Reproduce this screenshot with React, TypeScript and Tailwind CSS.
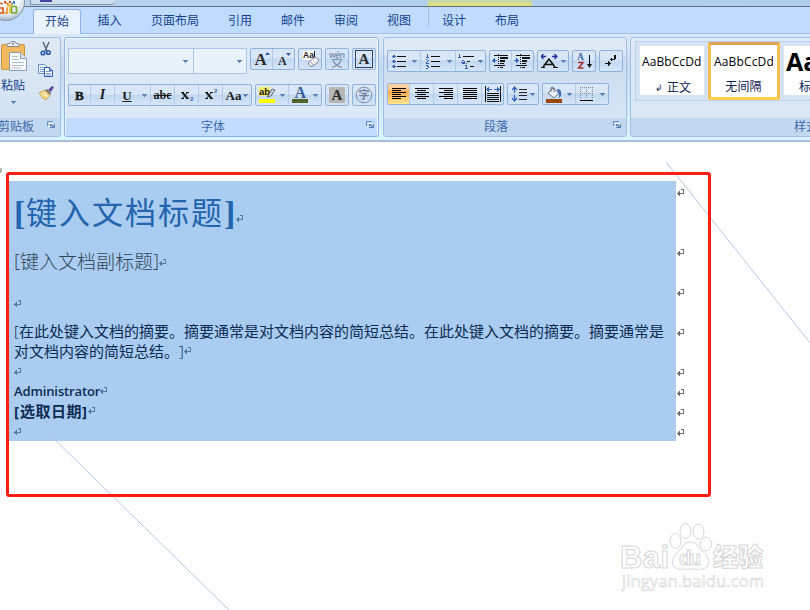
import type { ReactNode } from "react";

const FONT = "font-['Open_Sans','Noto_Sans_CJK_SC',sans-serif]";

/* ---------- ribbon primitives ---------- */

function Tab({ label, className }: { label: string; className: string }) {
  return <div className={`flex h-[27px] items-center justify-center text-[12px] text-[#15428b] ${className}`}>{label}</div>;
}

function Group({ children, className }: { children: ReactNode; className: string }) {
  return (
    <div
      className={`flex h-[22px] shrink-0 overflow-hidden rounded-[2px] border border-[#8fb3de] bg-linear-to-b from-[#d8e6f7] from-45% via-[#c2d7f0] via-50% to-[#d5e5f8] ${className}`}
    >
      {children}
    </div>
  );
}

function Cell({ children, className }: { children: ReactNode; className: string }) {
  return <div className={`flex shrink-0 items-center justify-center ${className}`}>{children}</div>;
}

function Caret() {
  return (
    <svg width="5" height="3" viewBox="0 0 5 3" shapeRendering="crispEdges" className="shrink-0">
      <path d="M0 0h5v1h-1v1h-1v1h-1v-1h-1v-1h-1z" fill="#5b84bb" />
    </svg>
  );
}

function Launcher() {
  return (
    <svg width="8" height="8" viewBox="0 0 8 8" shapeRendering="crispEdges" className="mb-[4px]">
      <path d="M0 5V0h6v1H1v4z" fill="#6d8fc0" />
      <path d="M3 7h5V3h-1v3H3z" fill="#5f82b5" />
      <path d="M3 3h2v1h1v1h1v2H4v-1h1v-1H3z" fill="#5f82b5" />
      <path d="M1 5h1v1H1zM2 2h4v1H2z" fill="#fff" />
    </svg>
  );
}

function PanelLabel({ children, className }: { children: ReactNode; className: string }) {
  return <div className={`mt-auto flex h-[18px] shrink-0 items-center text-[12px] text-[#3e6aaa] ${className}`}>{children}</div>;
}

/* ---------- icons ---------- */

const px = (d: string, fill = "#111") => <path d={d} fill={fill} />;

function Lines({ rows }: { rows: [number, number][] }) {
  return (
    <svg width="16" height="14" viewBox="0 0 16 14" shapeRendering="crispEdges">
      {rows.map(([x, w], i) => (
        <rect key={i} x={x} y={1 + i * 2} width={w} height="1" fill="#000" />
      ))}
    </svg>
  );
}

function OfficeOrb() {
  return (
    <svg width="26" height="22" viewBox="0 0 26 22">
      <defs>
        <radialGradient id="orb" cx="0.5" cy="0.3" r="0.7">
          <stop offset="0.5" stopColor="#f7fafc" />
          <stop offset="0.8" stopColor="#dce3eb" />
          <stop offset="1" stopColor="#a5b4c4" />
        </radialGradient>
      </defs>
      <circle cx="6" cy="2" r="18.500" fill="url(#orb)" stroke="#8795a7" />
      <g fill="none" strokeWidth="1.700">
        <path d="M0 3.500h3M0 8h3v5H0" stroke="#e35b1c" />
        <path d="M5 3.500h3v3M7 7.500v5.500H4" stroke="#f0902c" />
        <path d="M11 3.500h4" stroke="#3472bf" strokeDasharray="2 1" />
        <rect x="11.500" y="6.500" width="5" height="6.500" rx="1" stroke="#72aa2f" />
        <path d="M9.800 5v8M9 5h4" stroke="#f2bd2d" />
      </g>
      <path d="M4 1h2v2H4zM9 1h2v2H9z" fill="#e24a1a" />
      <path d="M13 1h2v2h-2z" fill="#2f6fc4" />
    </svg>
  );
}

function PasteIcon() {
  return (
    <svg width="28" height="31" viewBox="0 0 28 31">
      <rect x="1.500" y="3.500" width="23" height="25" rx="1.500" fill="#f2b95d" stroke="#cb923b" />
      <path d="M7 5.500V3.500q0-1 1-1h2q0-2 3-2t3 2h2q1 0 1 1v2z" fill="#eef1f5" stroke="#7d8794" />
      <circle cx="13" cy="3" r="1" fill="#6e7680" />
      <path d="M9.500 11.500h11l6 6v12h-17z" fill="#fafcff" stroke="#8c9bb4" />
      <path d="M20.500 11.500v6h6" fill="#dbe5f2" stroke="#8c9bb4" />
      <path d="M12 15.500h6M12 18.500h7M12 21.500h12M12 24.500h12M12 27h9" stroke="#b3bdcb" />
    </svg>
  );
}

function CutIcon() {
  return (
    <svg width="12" height="16" viewBox="0 0 12 16">
      <path d="M3 1l4 9M9 1L5 10" stroke="#5e6b80" strokeWidth="1.600" />
      <circle cx="3" cy="12" r="1.800" fill="none" stroke="#2c5cab" strokeWidth="1.600" />
      <circle cx="8.500" cy="11.500" r="1.800" fill="none" stroke="#2c5cab" strokeWidth="1.600" />
    </svg>
  );
}

function CopyIcon() {
  return (
    <svg width="16" height="14" viewBox="0 0 16 14">
      <path d="M.5.5h6l3 3v6h-9z" fill="#eff5fd" stroke="#6a90cb" />
      <path d="M2 3.500h4M2 5.500h5M2 7.500h5" stroke="#7e9fd4" />
      <path d="M6.500 3.500h5l3 3v6h-8z" fill="#f6faff" stroke="#2c58ae" />
      <path d="M8 7.500h5M8 9.500h5M8 11h5" stroke="#6287ca" strokeWidth=".8" />
      <path d="M11.500 3.500v3h3" fill="#a8c1e8" stroke="#2c58ae" />
    </svg>
  );
}

function BrushIcon() {
  return (
    <svg width="16" height="15" viewBox="0 0 16 15">
      <path d="M10 4l4-4 2 1-3 5z" fill="#5a4b9a" />
      <path d="M7 4l2-1 4 4-1 2z" fill="#77716c" />
      <path d="M1 7l5-3 6 5-4 5q-4-1-7-7z" fill="#f0d283" stroke="#bd9443" strokeWidth=".7" />
      <path d="M4 9l6 1M6 6l4 5" stroke="#fff2c3" />
    </svg>
  );
}

function GrowA({ small }: { small?: boolean }) {
  return (
    <svg width="18" height="18" viewBox="0 0 18 18">
      <text x={small ? 3 : 1.5} y="15" fontSize={small ? 12 : 17} fontWeight="700" fontFamily="Liberation Serif, serif" fill="#2b2b2b">A</text>
      <path d={small ? "M11 3h5l-2.500 3z" : "M12 5h5l-2.500-3z"} fill="#2f5ea8" />
    </svg>
  );
}

function ClearIcon() {
  return (
    <svg width="18" height="18" viewBox="0 0 18 18">
      <path d="M2 1h12v9h-12z" fill="#fff" />
      <path d="M13.500 1v7" stroke="#222" />
      <text x="2" y="8" fontSize="8.500" fontWeight="700" fontFamily="Liberation Sans, sans-serif" fill="#222">Aa</text>
      <path d="M7.500 13l5-5q2-1.500 4 .5t.5 3.500l-5 4q-2 1-3.500-.5t-1-2.500z" fill="#f5f6fa" stroke="#777c89" />
      <path d="M9 11.500l3.500 3.500" stroke="#9599a8" />
    </svg>
  );
}

function PinyinIcon() {
  return (
    <svg width="18" height="18" viewBox="0 0 18 18">
      <text x="1" y="7.500" fontSize="9" fontWeight="700" textLength="16" fontFamily="Liberation Sans, sans-serif" fill="#8193b4">wén</text>
      <path d="M3.500 9.500h11M9 8v2M5 10.500q2 5 9 7M13 10.500q-2 5-9 7" stroke="#7d90b2" strokeWidth="1.200" fill="none" />
    </svg>
  );
}

function SerifA({ className }: { className: string }) {
  return (
    <svg width="16" height="16" viewBox="0 0 16 16" className={className}>
      <text x="2.500" y="13" fontSize="15" fontWeight="700" fontFamily="Liberation Serif, serif" fill="#2b2b2b">A</text>
    </svg>
  );
}

function HighlightIcon() {
  return (
    <svg width="18" height="18" viewBox="0 0 18 18">
      <path d="M1 1h11v9H1z" fill="#f3ee67" />
      <text x="1" y="8.500" fontSize="9.500" fontFamily="Liberation Sans, sans-serif" fill="#111">ab</text>
      <path d="M10 10l4-7 3 1-4 6-4 1z" fill="#cfd6e2" stroke="#555c6d" strokeWidth=".9" />
      <rect x="1" y="13" width="16" height="4" fill="#ff0" />
    </svg>
  );
}

function FontColorIcon() {
  return (
    <svg width="18" height="18" viewBox="0 0 18 18">
      <text x="3.500" y="12" fontSize="16" fontWeight="700" fontFamily="Liberation Serif, serif" fill="#375b9b">A</text>
      <rect x="1" y="13" width="16" height="4" fill="#4f6228" />
    </svg>
  );
}

function CircledChar() {
  return (
    <svg width="18" height="18" viewBox="0 0 18 18">
      <circle cx="9" cy="9" r="7.800" fill="none" stroke="#7e8fac" />
      <text x="3.500" y="13" fontSize="11" fontFamily="Noto Sans CJK SC, sans-serif" fill="#6f80a0">字</text>
    </svg>
  );
}

function BoldIcon() {
  return (
    <svg width="16" height="16" viewBox="0 0 16 16">
      <text x="3" y="12.500" fontSize="13" fontWeight="700" stroke="#1c1c1c" strokeWidth=".5" fontFamily="Liberation Serif, serif" fill="#1c1c1c">B</text>
    </svg>
  );
}

function ScriptX({ raised }: { raised?: boolean }) {
  return (
    <svg width="16" height="18" viewBox="0 0 16 18">
      <path d="M2 6.500h3M7 6.500h3M2 12.500h3M7 12.500h3" stroke="#1c1c1c" />
      <path d="M3.500 6.500l5 6" stroke="#1c1c1c" strokeWidth="2" />
      <path d="M8.500 6.500l-5 6" stroke="#1c1c1c" strokeWidth="1" />
      <text x="11" y={raised ? 7 : 15} fontSize="6" fontWeight="700" fontFamily="Liberation Sans, sans-serif" fill="#3a63b0">2</text>
    </svg>
  );
}

function BulletsIcon() {
  return (
    <svg width="14" height="14" viewBox="0 0 14 14" shapeRendering="crispEdges">
      {px("M5 2h9v1H5zM5 7h9v1H5zM5 12h9v1H5z")}
      {px("M1 1h2v1h1v1H3v1H1V3H0V2h1zM1 6h2v1h1v1H3v1H1V8H0V7h1zM1 11h2v1h1v1H3v1H1v-1H0v-1h1z", "#4766a8")}
    </svg>
  );
}

function NumberingIcon() {
  return (
    <svg width="16" height="16" viewBox="0 0 16 16" shapeRendering="crispEdges">
      {px("M6 3h9v1H6zM6 8h9v1H6zM6 13h9v1H6z")}
      {px("M2 1h1v3h1v1H1V4h1V2H1zM1 6h2v1h1v1H3v1H2v1h2v1H1V9h1V8h1V7H1zM1 12h2v1h1v2H3v1H1v-1h2v-1H2v-1H1z", "#3b5fae")}
    </svg>
  );
}

function MultilevelIcon() {
  return (
    <svg width="18" height="17" viewBox="0 0 18 17" shapeRendering="crispEdges">
      {px("M6 3h11v1H6zM10 8h3v1h-3zM13 13h4v1h-4z")}
      {px("M2 1h1v3h1v1H1V4h1V2H1zM5 7h2v1h1v3H5v-1H4V9h3V8H5zM9 10h1v1H9zM8 12h2v3h1v1H8v-1h1v-2H8z", "#3b5fae")}
    </svg>
  );
}

function IndentIcon({ right }: { right?: boolean }) {
  return (
    <svg width="17" height="14" viewBox="0 0 17 14" shapeRendering="crispEdges">
      {px("M2 1h14v1H2zM8 3h8v2H8zM8 6h5v2H8zM8 9h4v1H8zM2 11h11v1H2zM8 13h3v1H8z")}
      {px("M6 0h1v1H6zM6 3h1v1H6zM6 5h1v1H6zM6 7h1v1H6zM6 9h1v1H6zM6 13h1v1H6z")}
      {right
        ? px("M0 6h2V4h1v1h1v1h1v1H4v1H3v1H2V7H0z", "#3366bb")
        : px("M0 6h1V5h1V4h1v2h2v1H3v2H2V8H1V7H0z", "#3366bb")}
    </svg>
  );
}

function ScaleIcon() {
  return (
    <svg width="17" height="15" viewBox="0 0 17 15">
      <path d="M0 2.500h5M2.500 0L0 2.500 2.500 5M11 2.500h5M13.500 0L16 2.500 13.500 5" fill="none" stroke="#2030a0" strokeWidth="1.300" />
      <path d="M2 13l6-8 6 8M4 10.500h8" fill="none" stroke="#161616" strokeWidth="1.600" />
      <path d="M0 13.500h4M12 13.500h5" stroke="#161616" />
    </svg>
  );
}

function SortIcon() {
  return (
    <svg width="17" height="18" viewBox="0 0 17 18">
      <text x="1" y="8" fontSize="9.500" fontWeight="700" fontFamily="Liberation Serif, serif" fill="#3d67ad">A</text>
      <path d="M2 10.500h5L2.500 16h5" fill="none" stroke="#a12f35" strokeWidth="1.500" />
      <path d="M13.500 3v10" stroke="#111" />
      <path d="M11 12h5l-2.500 4z" fill="#111" />
    </svg>
  );
}

function MarksIcon() {
  return (
    <svg width="14" height="14" viewBox="0 0 14 14" shapeRendering="crispEdges">
      {px("M10 1h2v4h-1v1H8v1H7V6H6V5h1V4h1v1h2zM1 9h3V7h1v1h1v1h1v1H6v1H5v1H4v-2H1z")}
    </svg>
  );
}

function DistributeIcon() {
  return (
    <svg width="17" height="17" viewBox="0 0 17 17" shapeRendering="crispEdges">
      {px("M0 0h1v16H0zM15 0h1v16h-1zM2 7h12v1H2zM2 9h12v1H2zM2 11h12v1H2zM2 13h12v1H2zM2 15h12v1H2z")}
      {px("M1 3h1V2h1V1h1v2h3v1H4v2H3V5H2V4H1zM15 3h-1V2h-1V1h-1v2H9v1h3v2h1V5h1V4h1z", "#3267be")}
    </svg>
  );
}

function SpacingIcon() {
  return (
    <svg width="16" height="17" viewBox="0 0 16 17">
      <path d="M2.500 1v6M0 4l2.500-3L5 4M2.500 9v6M0 12l2.500 3L5 12" fill="none" stroke="#3468b8" strokeWidth="1.300" />
      <path d="M7 3.500h8M7 6.500h8M7 9.500h8M7 13.500h8" stroke="#222" />
    </svg>
  );
}

function ShadingIcon() {
  return (
    <svg width="18" height="17" viewBox="0 0 18 17">
      <path d="M3 7l5-5 6 5-5 5z" fill="#edf1f6" stroke="#67707e" />
      <path d="M6 6V2q1-2 3 0v4" fill="none" stroke="#67707e" />
      <path d="M12 3q5-1 4 7l-2 2V8z" fill="#3d6eb5" />
      <rect x="1" y="13" width="16" height="4" fill="#984807" />
    </svg>
  );
}

function BordersIcon() {
  return (
    <svg width="14" height="14" viewBox="0 0 14 14" shapeRendering="crispEdges">
      <g stroke="#78869a" strokeDasharray="1 1" fill="none">
        <path d="M.5 0v12M6.500 0v12M12.500 0v12M0 .5h13M0 6.500h13" />
      </g>
      <rect y="13" width="13" height="1" fill="#000" />
    </svg>
  );
}

/* ---------- ribbon panels ---------- */

function ClipboardPanel() {
  return (
    <section className="mr-[4px] flex w-[61px] shrink-0 flex-col overflow-hidden rounded-r-[3px] border border-l-0 border-[#a0bfe3] bg-linear-to-b from-[#dfe9f5] to-[#cfe0f2]">
      <div className="flex">
        <div className="flex w-[36px] flex-col pt-[3px]">
          <PasteIcon />
          <span className="mt-[5px] ml-px h-[17px] text-[12px] leading-[17px] text-[#15428b]">粘贴</span>
          <span className="mt-[7px] ml-[11px] flex"><Caret /></span>
        </div>
        <div className="flex w-[20px] flex-col items-center pt-[3px]">
          <CutIcon />
          <span className="mt-[7px]"><CopyIcon /></span>
          <span className="mt-[8px]"><BrushIcon /></span>
        </div>
      </div>
      <PanelLabel className="justify-between bg-[#c1d8f0] pr-[5px]">
        <span className="-ml-[2px] w-[36px] whitespace-nowrap">剪贴板</span>
        <Launcher />
      </PanelLabel>
    </section>
  );
}

function FontPanel() {
  return (
    <section className="mr-[4px] -ml-px flex w-[315px] shrink-0 flex-col rounded-[3px] border border-[#8db2e3] bg-[#dce8f8] shadow-[inset_0_0_0_1px_#f2f8ff]">
      <div className="mt-[10px] ml-[3px] flex h-[26px] items-start">
        <div className="flex h-[26px] w-[126px] items-center justify-end border border-[#abc5e7] bg-[#e9f1fb] pr-[5px]"><Caret /></div>
        <div className="-ml-px flex h-[26px] w-[54px] items-center justify-end border border-[#abc5e7] bg-[#e9f1fb] pr-[4px]"><Caret /></div>
        <Group className="ml-[3px] w-[45px]">
          <Cell className="w-[22px] border-r border-[#b4cbe8]"><GrowA /></Cell>
          <Cell className="w-[21px]"><GrowA small /></Cell>
        </Group>
        <Group className="ml-[3px] w-[24px]"><Cell className="w-[22px]"><ClearIcon /></Cell></Group>
        <Group className="ml-[3px] w-[24px]"><Cell className="w-[22px]"><PinyinIcon /></Cell></Group>
        <Group className="ml-[3px] w-[24px]"><Cell className="w-[22px]"><SerifA className="outline outline-[#33445e]" /></Cell></Group>
      </div>
      <div className="mt-[10px] ml-[3px] flex font-['Liberation_Serif',serif] text-[14px] leading-none font-bold text-[#1c1c1c]">
        <Group className="w-[184px]">
          <Cell className="w-[22px] border-r border-[#b4cbe8]"><BoldIcon /></Cell>
          <Cell className="w-[24px] border-r border-[#b4cbe8] italic">I</Cell>
          <Cell className="w-[24px] text-[13px] underline">U</Cell>
          <Cell className="w-[12px] border-r border-[#b4cbe8]"><Caret /></Cell>
          <Cell className="w-[24px] border-r border-[#b4cbe8] text-[12px] line-through">abc</Cell>
          <Cell className="w-[24px] border-r border-[#b4cbe8]"><ScriptX /></Cell>
          <Cell className="w-[24px] border-r border-[#b4cbe8]"><ScriptX raised /></Cell>
          <Cell className="w-[28px] gap-[2px] text-[13px]">Aa<Caret /></Cell>
        </Group>
        <Group className="ml-[3px] w-[67px]">
          <Cell className="w-[20px] pl-[2px]"><HighlightIcon /></Cell>
          <Cell className="w-[13px] border-r border-[#b4cbe8]"><Caret /></Cell>
          <Cell className="w-[20px] pl-[2px]"><FontColorIcon /></Cell>
          <Cell className="w-[12px]"><Caret /></Cell>
        </Group>
        <Group className="ml-[3px] w-[24px]"><Cell className="w-[22px]"><SerifA className="bg-[#b5b5b5]" /></Cell></Group>
        <Group className="ml-[3px] w-[24px]"><Cell className="w-[22px]"><CircledChar /></Cell></Group>
      </div>
      <PanelLabel className="mx-px bg-[#c2dcff] pr-[3px]">
        <span className="flex-1 pr-[6px] text-center">字体</span>
        <Launcher />
      </PanelLabel>
    </section>
  );
}

function ParagraphPanel() {
  return (
    <section className="mr-[3px] flex w-[244px] shrink-0 flex-col overflow-hidden rounded-[3px] border border-[#a0bfe3] bg-linear-to-b from-[#dfe9f5] from-15% via-[#c9dbef] via-20% to-[#dae8f8]">
      <div className="mt-[12px] ml-[3px] flex">
        <Group className="w-[99px]">
          <Cell className="w-[22px]"><BulletsIcon /></Cell>
          <Cell className="w-[11px] border-r border-[#b4cbe8] pr-[2px]"><Caret /></Cell>
          <Cell className="w-[23px]"><NumberingIcon /></Cell>
          <Cell className="w-[12px] border-r border-[#b4cbe8]"><Caret /></Cell>
          <Cell className="w-[20px]"><MultilevelIcon /></Cell>
          <Cell className="w-[9px]"><Caret /></Cell>
        </Group>
        <Group className="ml-[3px] w-[45px]">
          <Cell className="w-[22px] border-r border-[#b4cbe8]"><IndentIcon /></Cell>
          <Cell className="w-[21px]"><IndentIcon right /></Cell>
        </Group>
        <Group className="ml-[3px] w-[32px]">
          <Cell className="w-[21px] pl-[2px]"><ScaleIcon /></Cell>
          <Cell className="w-[8px]"><Caret /></Cell>
        </Group>
        <Group className="ml-[3px] w-[24px]"><Cell className="w-[22px]"><SortIcon /></Cell></Group>
        <Group className="ml-[3px] w-[24px]"><Cell className="w-[22px]"><MarksIcon /></Cell></Group>
      </div>
      <div className="mt-[11px] ml-[3px] flex">
        <Group className="w-[117px]">
          <Cell className="w-[22px] border-r border-[#b4cbe8] bg-linear-to-b from-[#fbd3a0] from-20% via-[#fcaa4c] via-40% to-[#ffe58d]">
            <Lines rows={[[1, 14], [1, 9], [1, 14], [1, 9], [1, 14], [1, 9]]} />
          </Cell>
          <Cell className="w-[24px] border-r border-[#b4cbe8]"><Lines rows={[[1, 14], [3, 9], [1, 14], [3, 9], [1, 14], [3, 9]]} /></Cell>
          <Cell className="w-[24px] border-r border-[#b4cbe8]"><Lines rows={[[1, 14], [6, 9], [1, 14], [6, 9], [1, 14], [6, 9]]} /></Cell>
          <Cell className="w-[24px] border-r border-[#b4cbe8]"><Lines rows={[[1, 14], [1, 14], [1, 14], [1, 14], [1, 14], [1, 14]]} /></Cell>
          <Cell className="w-[21px] pl-px"><DistributeIcon /></Cell>
        </Group>
        <Group className="ml-[3px] w-[32px]">
          <Cell className="w-[21px] pl-[2px]"><SpacingIcon /></Cell>
          <Cell className="w-[6px]"><Caret /></Cell>
        </Group>
        <Group className="ml-[3px] w-[67px]">
          <Cell className="w-[20px] pl-[2px]"><ShadingIcon /></Cell>
          <Cell className="w-[13px] border-r border-[#b4cbe8]"><Caret /></Cell>
          <Cell className="w-[21px]"><BordersIcon /></Cell>
          <Cell className="w-[10px]"><Caret /></Cell>
        </Group>
      </div>
      <PanelLabel className="bg-[#c1d8f0] pr-[5px]">
        <span className="flex-1 pr-[5px] text-center">段落</span>
        <Launcher />
      </PanelLabel>
    </section>
  );
}

function StyleCard({ sample, name, className }: { sample: string; name: ReactNode; className: string }) {
  return (
    <div className={`flex shrink-0 flex-col overflow-hidden bg-white text-center whitespace-nowrap ${className}`}>
      <span className="flex h-[32px] items-center">{sample}</span>
      <span className="h-[17px] text-[12px] leading-[17px] font-normal text-[#0d2155]">{name}</span>
    </div>
  );
}

function StylesPanel() {
  return (
    <section className="flex w-[220px] shrink-0 flex-col overflow-hidden rounded-[3px] border border-[#a0bfe3] bg-linear-to-b from-[#dfe9f5] to-[#d6e5f6]">
      <div className="mt-[3px] ml-[4px] flex h-[60px] w-[210px] border border-[#b9d0ed] bg-[#d5e3f4] text-black">
        <StyleCard
          sample="AaBbCcDd"
          name={<span className="inline-flex items-center gap-[4px]"><span className="text-[9px]">↲</span>正文</span>}
          className="mt-[4px] ml-[4px] h-[49px] w-[64px] pl-[2px] text-[12px] tracking-[0.08px]"
        />
        <div className="ml-[4px] h-[58px] w-[72px] shrink-0 rounded-[2px] border-[3px] border-[#f5bf52] border-t-[#dfa252] border-b-[#ffcf4c] bg-white">
          <StyleCard sample="AaBbCcDd" name="无间隔" className="h-[50px] w-[62px] pt-px pl-[3px] text-[12px] tracking-[0.150px]" />
        </div>
        <StyleCard sample="AaBb" name="标题 1" className="mt-[4px] ml-[4px] h-[49px] w-[62px] pl-[2px] text-[25px] font-bold" />
      </div>
      <PanelLabel className="bg-[#c1d8f0]"><span className="pl-[163px] whitespace-nowrap">样式</span></PanelLabel>
    </section>
  );
}

/* ---------- document ---------- */

function Mark({ className = "text-[#58779e]" }: { className?: string }) {
  return (
    <svg width="8" height="8" viewBox="0 0 8 8" shapeRendering="crispEdges" className={`shrink-0 ${className}`}>
      <path d="M4 0h3v5H3v2H2V6H1V5H0V4h1V3h1V2h1v2h3V1H4z" fill="currentColor" />
    </svg>
  );
}

function Row({ children, className }: { children: ReactNode; className: string }) {
  return (
    <div className={`flex ${className}`}>
      <div className="w-[667px] bg-[#a9ccf0] pl-[5px] whitespace-nowrap">{children}</div>
      <div className="pt-[8px] pl-[1px]"><Mark className="text-[#6e6e6e]" /></div>
    </div>
  );
}

function Document() {
  return (
    <main className="relative h-[468px] overflow-hidden bg-white pt-[39px] pl-[9px] text-[#0b2b52]">
      <Row className="h-[60px]">
        <div className="flex h-[60px] items-center text-[#2264ad]">
          <span className="mt-[5px] w-[12px] font-['Liberation_Serif',serif] text-[34px] leading-none font-bold">[</span>
          <span className="-mt-[2px] font-['Noto_Sans_CJK_SC',sans-serif] text-[31px] leading-none font-normal tracking-[2px]">键入文档标题</span>
          <span className="mt-[5px] w-[11px] font-['Liberation_Serif',serif] text-[34px] leading-none font-bold">]</span>
          <span className="mt-[15px] ml-px"><Mark /></span>
        </div>
      </Row>
      <Row className="h-[40px]">
        <div className="flex h-[38px] items-center text-[19px] leading-none font-light text-[#2f4858]">
          <span className="w-[6px]">[</span>
          <span className="font-['Noto_Sans_CJK_SC',sans-serif]">键入文档副标题</span>
          <span className="w-[6px]">]</span>
          <span className="mt-[6px]"><Mark /></span>
        </div>
      </Row>
      <Row className="h-[40px]"><div className="pt-[19px]"><Mark /></div></Row>
      <Row className="h-[40px]">
        <div className="text-[15px] leading-[20px] font-normal text-[#0b2b52]">
          <div className="flex"><span className="w-[5px] font-light">[</span>在此处键入文档的摘要。摘要通常是对文档内容的简短总结。在此处键入文档的摘要。摘要通常是</div>
          <div className="flex items-center">对文档内容的简短总结。<span className="w-[5px] font-light">]</span><Mark /></div>
        </div>
      </Row>
      <Row className="h-[20px]"><div className="pt-[7px]"><Mark /></div></Row>
      <Row className="h-[20px]">
        <div className="flex items-center text-[13px] leading-[20px] font-semibold tracking-[-0.12px]">Administrator<Mark /></div>
      </Row>
      <Row className="h-[20px]">
        <div className="flex items-center text-[15px] leading-[20px] font-bold"><span className="w-[6px]">[</span><span className="tracking-[0.500px]">选取日期</span><span className="w-[6px]">]</span><Mark /></div>
      </Row>
      <Row className="h-[20px]"><div className="pt-[7px]"><Mark /></div></Row>

      <svg width="810" height="468" viewBox="0 142 810 468" className="absolute top-0 left-0">
        <path d="M666 162L811 344M46 431L229 610" stroke="#b4c8e4" fill="none" />
        <path d="M1 168v4h-1" stroke="#777" fill="none" />
        <rect x="7.500" y="173.500" width="702" height="322" rx="1.500" fill="none" stroke="#fc1d13" strokeWidth="3" />
        <g fill="#fff" stroke="#d6d6d6" strokeWidth="1">
          <text x="620" y="568" fontSize="31" fontWeight="700" textLength="49" fontFamily="Liberation Sans, sans-serif">Bai</text>
          <ellipse cx="675.500" cy="541" rx="5.500" ry="7.500" />
          <ellipse cx="685.500" cy="531" rx="5.500" ry="7.500" />
          <ellipse cx="698.500" cy="531.500" rx="5.500" ry="7.500" />
          <ellipse cx="706" cy="544" rx="5.500" ry="7" />
          <path d="M690 542c7 0 8 5 12 9c7 6 8 10 6 14c-3 6-10 4-18 4s-14 2-17-4c-2-5 1-9 6-14c4-4 5-9 11-9z" />
          <text x="679" y="565" fontSize="20" fontWeight="700" textLength="22" fontFamily="Liberation Sans, sans-serif">du</text>
          <text x="713" y="566" fontSize="25" fontWeight="900" textLength="50" fontFamily="Noto Sans CJK SC, sans-serif">经验</text>
          <text x="622" y="587" fontSize="16.500" strokeWidth=".6" textLength="142" fontFamily="Open Sans, sans-serif">jingyan.baidu.com</text>
        </g>
      </svg>
    </main>
  );
}

export default function App() {
  return (
    <div className={`h-[610px] w-[810px] overflow-hidden bg-white ${FONT}`}>
      <header className="relative">
        <div className="flex h-[7px] items-start border-b border-[#5f7387] bg-linear-to-r from-[#b9d3ec] to-[#adcdea]">
          <div className="ml-[30px] flex h-[5px] w-[86px] rounded-br-[6px] border-b border-l border-[#8494ab] bg-[#cfdeef] pl-[9px]">
            <div className="h-[2px] w-[12px] bg-[#49429a]" />
          </div>
          <div className="ml-[312px] h-[6px] w-[104px] bg-linear-to-b from-[#c2d6ae] to-[#e6e36d]" />
        </div>
        <nav className="flex h-[27px] items-start border-b border-[#9fc0ea] bg-[#bfdbff]">
          <div className="mt-[2px] ml-[33px] flex h-[25px] w-[48px] items-center justify-center rounded-t-[3px] border border-b-0 border-[#8db2e3] bg-[#e9f2fe] pb-[1px] text-[12px] text-[#15428b]">开始</div>
          <Tab label="插入" className="w-[57px]" />
          <Tab label="页面布局" className="w-[74px]" />
          <Tab label="引用" className="w-[56px]" />
          <Tab label="邮件" className="w-[50px]" />
          <Tab label="审阅" className="w-[56px]" />
          <Tab label="视图" className="w-[50px]" />
          <div className="ml-[4px] h-[20px] w-px bg-[#a5bfd9]" />
          <Tab label="设计" className="w-[50px]" />
          <Tab label="布局" className="w-[56px]" />
        </nav>
        <div className="flex h-[108px] border-b-2 border-[#a8bddd] bg-linear-to-b from-[#dae7f7] from-10% via-[#c5d8ee] via-30% to-[#dcf6fd] pt-[3px] pb-[3px]">
          <ClipboardPanel />
          <FontPanel />
          <ParagraphPanel />
          <StylesPanel />
        </div>
        <div className="absolute top-0 left-0"><OfficeOrb /></div>
      </header>
      <Document />
    </div>
  );
}
